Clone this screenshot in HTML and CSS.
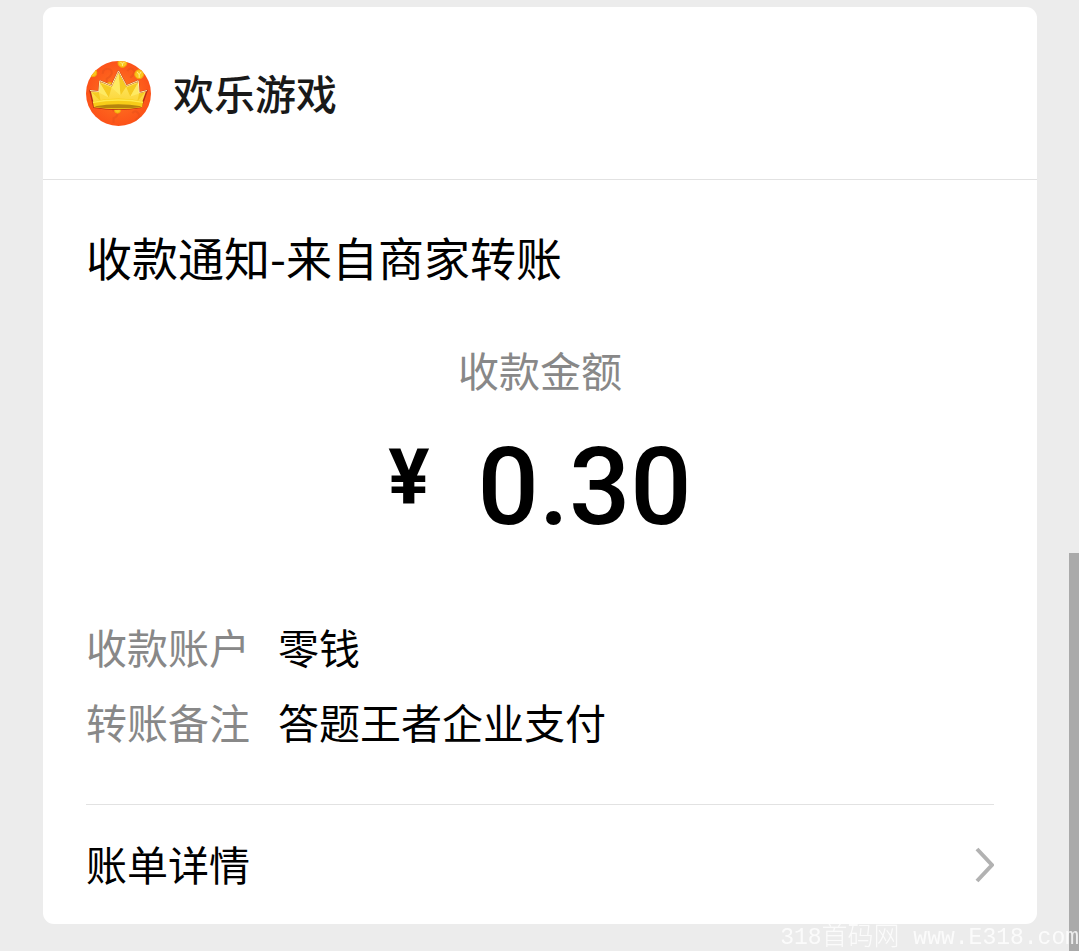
FILE: index.html
```html
<!DOCTYPE html>
<html lang="zh-CN">
<head>
<meta charset="utf-8">
<meta name="viewport" content="width=device-width, initial-scale=1">
<title>收款通知</title>
<link rel="stylesheet" href="styles.css">
</head>
<body>
<main class="card">
  <header class="card-header">
    <svg class="logo" viewBox="0 0 66 66" aria-hidden="true">
      <defs>
        <radialGradient id="orange"><stop offset="0" stop-color="#ff7a22"/><stop offset="1" stop-color="#fc5219"/></radialGradient>
        <linearGradient id="gold" x2="0" y2="1"><stop offset="0" stop-color="#fff07a"/><stop offset="1" stop-color="#fbd02a"/></linearGradient>
        <clipPath id="disc"><circle cx="33" cy="33" r="33"/></clipPath>
      </defs>
      <g clip-path="url(#disc)">
        <rect width="66" height="66" fill="url(#orange)"/>
        <g fill="none" stroke="#e6501a" stroke-width="2" opacity=".5">
          <path d="M17 13q0-5 5-5t4 5q-1 3-5 5v4M42 10q3-4 6-1t-3 8M27 51q4-3 5 1t-4 6v5M47 53q3-4 6 0t-3 7"/>
        </g>
        <g fill="#fbc61d" stroke="#f2a60c">
          <circle cx="37" cy="2" r="4.500"/><circle cx="54" cy="13.500" r="4.500"/><circle cx="7" cy="12" r="4"/><circle cx="24" cy="24" r="2.500"/><circle cx="32" cy="50" r="3"/>
        </g>
        <path d="M35 1l2 2 2-2M37 3v2M52 11l2 3 2-3M54 14v3" fill="none" stroke="#fff08a"/>
        <path d="M4 30l9 1 1-11 12 5 7-15 8 15 12-5 1 12 8-2-6 17q-24 4-48 0z" fill="url(#gold)" stroke="#b92b12" stroke-width="1.500" stroke-linejoin="round"/>
        <path d="M33 12l2 23 6-9zM14 22l9 15 3-10zM53 22l-8 14-4-9zM6 32l9 9-2-9zM60 32l-8 9 2-8z" fill="#f5ca22"/>
        <path d="M33 12l-7 15 9 8zM14 22l-1 10 10 5zM53 22l1 11-9 3z" fill="#feea62"/>
        <path d="M4 30l9 1 1-11 12 5 7-15 8 15 12-5 1 12 8-2" fill="none" stroke="#fff5ae" stroke-width="1"/>
        <path d="M7 41q26-6 51 0l-1 6q-24 4-49 0z" fill="#f8cc18"/>
        <path d="M9 46q24-4 47 0-1 2-23 2T9 46z" fill="#b5840e"/>
        <path d="M7 42q26-5 51 0" fill="none" stroke="#ffe94c" stroke-width="1.500"/>
      </g>
    </svg>
    <h1 class="merchant">欢乐游戏</h1>
  </header>
  <div class="card-body">
    <h2 class="title">收款通知-来自商家转账</h2>
    <section class="payment">
      <p class="payment-label">收款金额</p>
      <p class="amount"><span class="currency">¥</span><span class="value">0.30</span></p>
    </section>
    <dl class="details">
      <div class="row"><dt>收款账户</dt><dd>零钱</dd></div>
      <div class="row"><dt>转账备注</dt><dd>答题王者企业支付</dd></div>
    </dl>
    <a class="bill-link" href="#">
      <span>账单详情</span>
      <svg class="chevron" viewBox="0 0 20 36" aria-hidden="true"><path d="M3 2l15 16L3 34"/></svg>
    </a>
  </div>
</main>
<div class="scroll-thumb"></div>
<p class="watermark">318<span class="watermark-cjk">首码网</span> www.E318.com</p>
</body>
</html>
```
FILE: styles.css
```css
* { box-sizing: border-box; }

body {
  margin: 0;
  padding: 7px 42px 27px 43px;
  background: #ececec;
  color: #000;
  font-family: "Noto Sans CJK SC", sans-serif;
  font-size: 41px;
  line-height: 60px;
}

h1, h2, p, dl, dd { margin: 0; font: inherit; }

.card {
  background: #fff;
  border-radius: 11px;
}

.card-header {
  display: flex;
  align-items: center;
  gap: 22px;
  height: 173px;
  padding: 0 43px;
  border-bottom: 1px solid #e2e2e2;
}

.logo { width: 65px; height: 65px; flex: none; }

.merchant {
  color: #191919;
  font-weight: 500;
  line-height: 56px;
  padding-bottom: 2px;
}

.card-body { padding: 42px 43px 0; }

.title {
  font-size: 46px;
  line-height: 68px;
}

.payment {
  padding-top: 49px;
  text-align: center;
}

.payment-label { color: #888; }

.amount {
  display: flex;
  justify-content: center;
  align-items: flex-start;
  gap: 48px;
  padding-top: 28px;
  font-family: Roboto, sans-serif;
}

.currency {
  font-size: 77px;
  font-weight: 700;
  line-height: 102px;
}

.value {
  font-size: 108px;
  font-weight: 500;
  line-height: 120px;
}

.details { padding: 69px 0 53px; }

.row {
  display: flex;
  gap: 28px;
}

.row + .row { padding-top: 15px; }

.row dt { color: #888; }

.bill-link {
  display: flex;
  align-items: center;
  justify-content: space-between;
  height: 120px;
  border-top: 1px solid #e2e2e2;
  color: #000;
  text-decoration: none;
}

.bill-link span { padding-bottom: 3px; }

.chevron {
  width: 20px;
  height: 36px;
  fill: none;
  stroke: #b2b2b2;
  stroke-width: 4;
}

.scroll-thumb {
  position: fixed;
  right: 0;
  bottom: 0;
  width: 10px;
  height: 398px;
  background: #aaa;
}

.watermark {
  position: fixed;
  right: 0;
  bottom: 0;
  color: #fff;
  font-family: "Liberation Mono", "Noto Sans CJK SC", monospace;
  font-size: 23px;
  line-height: 26px;
  white-space: nowrap;
  opacity: .8;
}

.watermark-cjk {
  font-family: "Noto Sans CJK SC", sans-serif;
  font-size: 26px;
  font-weight: 300;
  vertical-align: -1px;
}
```
